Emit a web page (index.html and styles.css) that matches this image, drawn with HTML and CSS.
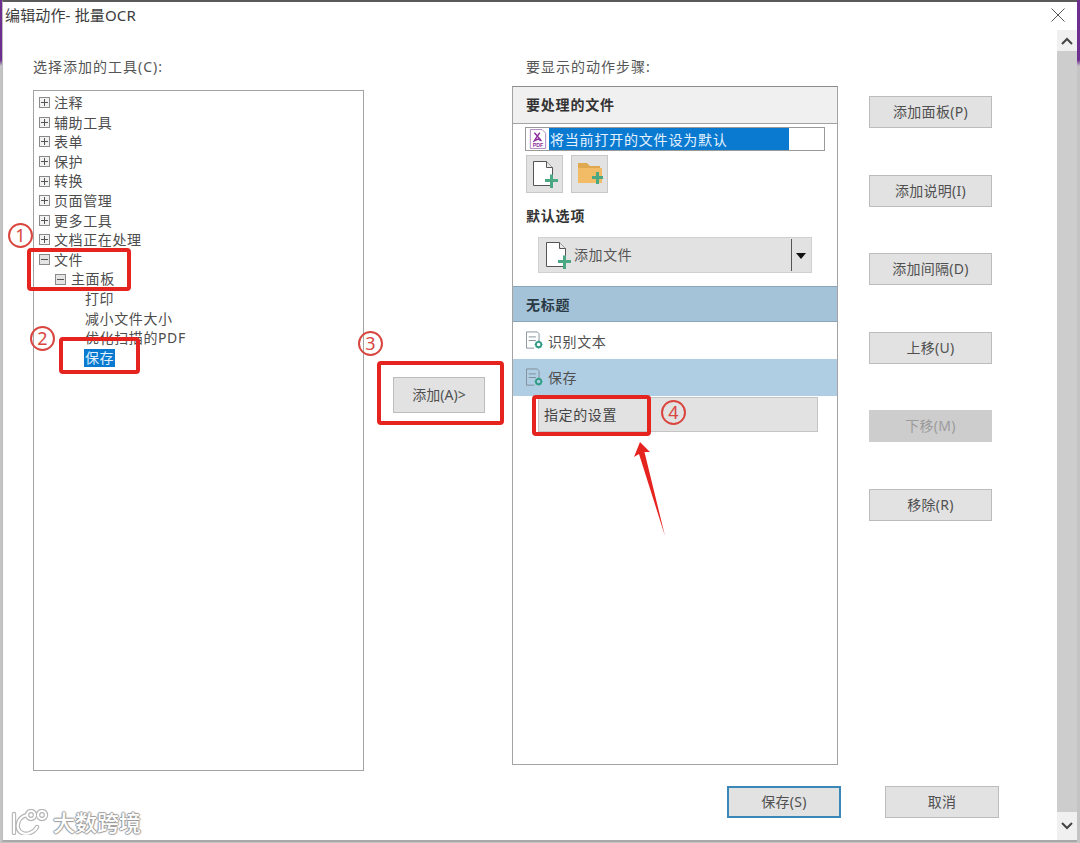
FILE: index.html
```html
<!DOCTYPE html>
<html lang="zh-CN">
<head>
<meta charset="utf-8">
<title>编辑动作- 批量OCR</title>
<link rel="stylesheet" href="styles.css">
</head>
<body>
<svg class="defs" width="0" height="0" aria-hidden="true">
  <symbol id="plus" viewBox="0 0 11 11"><rect x=".5" y=".5" width="10" height="10" fill="#f2f2f2" stroke="#8a8a8a"/><path d="M2 5.5h7M5.5 2v7" stroke="#555" fill="none"/></symbol>
  <symbol id="minus" viewBox="0 0 11 11"><rect x=".5" y=".5" width="10" height="10" fill="#e4e4e4" stroke="#8a8a8a"/><path d="M2 5.5h7" stroke="#555" fill="none"/></symbol>
  <symbol id="docplus" viewBox="0 0 30 30"><path d="M3.5 2.5h13l6 6v18h-19z" fill="#fff" stroke="#555"/><path d="M16.5 2.5v6h6" fill="#e8e8e8" stroke="#555"/><path d="M17 17h5v-4.500h3V17h5v3h-5v6h-3v-6h-5z" fill="#4aa882" transform="translate(-2 3)"/></symbol>
  <symbol id="folderplus" viewBox="0 0 30 30"><path d="M3 4h9l3 3h10v4H3z" fill="#e0a94f"/><path d="M3 9h24v15H3z" fill="#f2bb66"/><path d="M17 17h4v-4h3v4h4v3h-4v5h-3v-5h-4z" fill="#4aa882"/></symbol>
  <symbol id="docgear" viewBox="0 0 20 20"><path d="M.5 .5h12l2 2v9M9 18.500H.5V.5" fill="none" stroke="#7d8a94"/><path d="M3 6h8M3 10h8" stroke="#7d8a94" fill="none"/><circle cx="14" cy="14.500" r="3" fill="none" stroke="#2f9c86" stroke-width="2"/><path d="M14 10v1.500M14 17.500V19M9.500 14.500H11M17 14.500h1.500M11 11.500l1 1M16 16.500l1 1M17 11.500l-1 1M12 16.500l-1 1" stroke="#2f9c86"/></symbol>
</svg>
<div class="desktop">
  <div class="window">
    <header class="titlebar">
      <span class="title">编辑动作- 批量OCR</span>
      <svg class="close" viewBox="0 0 14 14"><path d="M.5 .5l13 13M13.500 .5l-13 13" stroke="#555" fill="none"/></svg>
    </header>
    <div class="body">
      <main class="main">
        <div class="columns">
          <section class="col-tree">
            <div class="label">选择添加的工具(C):</div>
            <div class="tree">
              <div class="row"><svg class="exp"><use href="#plus"/></svg>注释</div>
              <div class="row"><svg class="exp"><use href="#plus"/></svg>辅助工具</div>
              <div class="row"><svg class="exp"><use href="#plus"/></svg>表单</div>
              <div class="row"><svg class="exp"><use href="#plus"/></svg>保护</div>
              <div class="row"><svg class="exp"><use href="#plus"/></svg>转换</div>
              <div class="row"><svg class="exp"><use href="#plus"/></svg>页面管理</div>
              <div class="row"><svg class="exp"><use href="#plus"/></svg>更多工具</div>
              <div class="row"><svg class="exp"><use href="#plus"/></svg>文档正在处理</div>
              <div class="row"><svg class="exp"><use href="#minus"/></svg>文件</div>
              <div class="row lvl2"><svg class="exp"><use href="#minus"/></svg>主面板</div>
              <div class="row lvl3">打印</div>
              <div class="row lvl3">减小文件大小</div>
              <div class="row lvl3">优化扫描的PDF</div>
              <div class="row lvl3"><span class="sel">保存</span></div>
            </div>
          </section>
          <section class="col-add">
            <button class="btn btn-add">添加(A)&gt;</button>
          </section>
          <section class="col-steps">
            <div class="label label-steps">要显示的动作步骤:</div>
            <div class="panel">
              <div class="panel-head">要处理的文件</div>
              <div class="file-input">
                <svg class="pdf" viewBox="0 0 20 22"><path d="M1.500 .5h13l4 4v17h-17z" fill="#fff" stroke="#a67fbc"/><path d="M6 4l7 8M12 4L9 8l-3 5 4-2 4 2" stroke="#8e2f9e" stroke-width="1.600" fill="none"/><text class="pdf-label" x="10" y="20" text-anchor="middle">PDF</text></svg>
                <span class="file-sel">将当前打开的文件设为默认</span>
              </div>
              <div class="tool-row">
                <button class="tool"><svg class="tool-icon"><use href="#docplus"/></svg></button>
                <button class="tool"><svg class="tool-icon"><use href="#folderplus"/></svg></button>
              </div>
              <div class="sub-head">默认选项</div>
              <div class="dropdown">
                <svg class="drop-icon"><use href="#docplus"/></svg>
                <span class="drop-text">添加文件</span>
                <span class="drop-arrow"></span>
              </div>
              <div class="group-head">无标题</div>
              <div class="step"><svg class="gear"><use href="#docgear"/></svg>识别文本</div>
              <div class="step step-active"><svg class="gear"><use href="#docgear"/></svg>保存</div>
              <button class="setting">指定的设置</button>
            </div>
          </section>
          <section class="col-actions">
            <button class="btn btn-side">添加面板(P)</button>
            <button class="btn btn-side">添加说明(I)</button>
            <button class="btn btn-side">添加间隔(D)</button>
            <button class="btn btn-side">上移(U)</button>
            <button class="btn btn-side btn-disabled">下移(M)</button>
            <button class="btn btn-side">移除(R)</button>
          </section>
        </div>
        <footer class="footer">
          <button class="btn btn-foot btn-primary">保存(S)</button>
          <button class="btn btn-foot">取消</button>
        </footer>
      </main>
      <aside class="scrollbar">
        <div class="sb-arrow"><svg class="chev" viewBox="0 0 12 8"><path d="M1 7l5-5 5 5" stroke="#444" stroke-width="2" fill="none"/></svg></div>
        <div class="sb-thumb"></div>
        <div class="sb-arrow sb-down"><svg class="chev" viewBox="0 0 12 8"><path d="M1 1l5 5 5-5" stroke="#444" stroke-width="2" fill="none"/></svg></div>
      </aside>
    </div>
  </div>

  <div class="mark m1"></div>
  <div class="mark m2"></div>
  <div class="mark m3"></div>
  <div class="mark m4"></div>
  <span class="num n1">1</span>
  <span class="num n2">2</span>
  <span class="num n3">3</span>
  <span class="num n4">4</span>
  <svg class="arrow" viewBox="0 0 40 100"><path d="M8 0L18 10 12.500 10 33 94 7 12 2 15z" fill="#e5231f"/></svg>
  <div class="watermark">
    <svg class="wm-logo" viewBox="0 0 40 26"><g fill="none" stroke-linecap="round"><g stroke="#b4b4b4" stroke-width="4.400"><path d="M4 5v19M17 6C9 8 7 14 8 19s7 7 12 5 6-4 7-6"/><circle cx="21" cy="6" r="4"/><circle cx="32" cy="6" r="4"/></g><g stroke="#fff" stroke-width="2.200"><path d="M4 5v19M17 6C9 8 7 14 8 19s7 7 12 5 6-4 7-6"/><circle cx="21" cy="6" r="4"/><circle cx="32" cy="6" r="4"/></g></g></svg>
    <span class="wm-text">大数跨境</span>
  </div>
</div>
</body>
</html>
```

FILE: styles.css
```css
* { box-sizing: border-box; }
html, body { margin: 0; padding: 0; }
body {
  width: 1080px;
  height: 843px;
  overflow: hidden;
  font-family: "Noto Sans", "Noto Sans CJK SC", sans-serif;
  font-size: 14px;
  color: #4a4a4a;
  background: #fff;
}
.defs { position: absolute; }
.desktop {
  position: relative;
  width: 1080px;
  height: 843px;
  padding: 0 3px 0 2px;
  background: linear-gradient(#6d2f8f 0 60px, #c4c4c4 66px);
}
.window {
  width: 1075px;
  height: 842px;
  background: #fff;
  border-top: 2px solid #5a5a5a;
  border-left: 1px solid #bdbdbd;
  border-bottom: 2px solid #a8a8a8;
  display: flex;
  flex-direction: column;
}
.titlebar {
  height: 28px;
  flex: none;
  display: flex;
  align-items: center;
  justify-content: space-between;
  padding: 0 12px 3px 2px;
}
.title { font-size: 15px; letter-spacing: .15px; color: #3c3c3c; line-height: 24px; }
.close { width: 14px; height: 14px; }
.body { flex: 1; display: flex; min-height: 0; }
.main { flex: 1; padding: 27px 58px 0 30px; display: flex; flex-direction: column; }
.columns { display: flex; height: 714px; flex: none; }
.label { height: 20px; line-height: 20px; letter-spacing: 1px; color: #555; margin-bottom: 14px; white-space: nowrap; }
.col-tree { width: 331px; flex: none; }
.col-tree .label { margin-bottom: 13px; }
.tree {
  height: 681px;
  border: 1px solid #a3a3a3;
  padding: 2px 0 0 5px;
  background: #fff;
}
.row {
  height: 19.600px;
  line-height: 19.600px;
  display: flex;
  align-items: center;
  letter-spacing: .6px;
  white-space: nowrap;
  color: #4d4d4d;
}
.exp { width: 11px; height: 11px; margin-right: 4px; flex: none; }
.lvl2 { padding-left: 16px; }
.lvl2 .exp { margin-right: 5px; }
.lvl3 { padding-left: 46px; }
.sel { background: #0a7ad1; color: #dff0ff; padding: 0 1px; margin-left: -1px; height: 18px; line-height: 18px; }

.col-add { width: 148px; flex: none; padding: 320px 0 0 29px; }
.btn {
  font: inherit;
  color: #505050;
  background: #e2e2e2;
  border: 1px solid #bcbcbc;
  padding: 0 0 2px;
  white-space: nowrap;
  display: block;
}
.btn-add { width: 92px; height: 36px; }

.col-steps { width: 326px; flex: none; }
.label-steps { padding-left: 14px; margin-bottom: 9px; }
.panel { height: 679px; border: 1px solid #a3a3a3; border-top-color: #8c8c8c; background: #fff; }
.panel-head {
  height: 37px;
  line-height: 36px;
  padding-left: 13px;
  background: #f0f0f0;
  border-bottom: 1px solid #a3a3a3;
  font-weight: 700;
  letter-spacing: .8px;
  color: #333;
}
.file-input {
  margin: 3px 0 0 12px;
  width: 300px;
  height: 24px;
  border: 1px solid #9a9a9a;
  display: flex;
  align-items: center;
  padding-left: 3px;
}
.pdf { width: 18px; height: 20px; flex: none; margin-right: 2px; }
.pdf-label { font-size: 6px; font-weight: 700; fill: #8e2f9e; font-family: "Liberation Sans", sans-serif; }
.file-sel {
  width: 240px;
  height: 22px;
  line-height: 24px;
  background: #0a7ad1;
  color: #e4f2ff;
  letter-spacing: .8px;
  padding-left: 1px;
  white-space: nowrap;
}
.tool-row { display: flex; gap: 8px; margin: 4px 0 0 13px; }
.tool {
  width: 37px;
  height: 38px;
  background: #e2e2e2;
  border: 1px solid #c8c8c8;
  padding: 0;
  display: flex;
  align-items: center;
  justify-content: center;
}
.tool-icon { width: 30px; height: 30px; }
.sub-head { height: 20px; line-height: 20px; margin: 13px 0 0 13px; font-weight: 700; letter-spacing: .8px; color: #333; }
.dropdown {
  margin: 11px 0 0 25px;
  width: 274px;
  height: 36px;
  background: #e2e2e2;
  border: 1px solid #d0d0d0;
  display: flex;
  align-items: center;
  padding-left: 4px;
}
.drop-icon { width: 30px; height: 30px; flex: none; }
.drop-text { flex: 1; letter-spacing: .6px; color: #555; padding: 0 0 2px 1px; }
.drop-arrow {
  width: 20px;
  height: 32px;
  flex: none;
  border-left: 1px solid #555;
  position: relative;
}
.drop-arrow::after {
  content: "";
  position: absolute;
  left: 4px;
  top: 14px;
  border: 5.500px solid transparent;
  border-top: 6px solid #111;
  border-bottom: 0;
}
.group-head {
  margin-top: 13px;
  height: 36px;
  line-height: 35px;
  padding-left: 13px;
  background: #a5c3d8;
  border-top: 1px solid #8aa5b8;
  border-bottom: 1px solid #8aa5b8;
  font-weight: 700;
  letter-spacing: .8px;
  color: #2a3a45;
}
.step {
  height: 37px;
  display: flex;
  align-items: center;
  padding-left: 13px;
  letter-spacing: .6px;
  color: #505050;
}
.step-active { background: #b0cee3; padding-bottom: 1px; }
.gear { width: 18px; height: 19px; margin-right: 4px; flex: none; }
.setting {
  display: block;
  margin: 1px 0 0 25px;
  width: 280px;
  height: 35px;
  font: inherit;
  letter-spacing: .6px;
  text-align: left;
  color: #444;
  padding: 0 0 2px 5px;
  background: #e2e2e2;
  border: 1px solid #c4c4c4;
}

.col-actions { margin-left: 31px; width: 123px; flex: none; padding-top: 39px; display: flex; flex-direction: column; gap: 46.600px; }
.btn-side { width: 123px; height: 32px; letter-spacing: .3px; }
.btn-disabled { background: #cdcdcd; border-color: #cdcdcd; color: #9c9c9c; }
.footer { display: flex; justify-content: flex-end; gap: 44px; margin-top: 15px; }
.btn-foot { width: 114px; height: 32px; letter-spacing: .3px; }
.btn-primary { border: 2px solid #3a87b8; }

.scrollbar { width: 20px; flex: none; display: flex; flex-direction: column; background: #f0f0f0; }
.sb-arrow { height: 21px; flex: none; display: flex; align-items: center; justify-content: center; }
.sb-down { height: 28px; }
.sb-thumb { flex: 1; background: #cdcdcd; }
.chev { width: 12px; height: 8px; }

.mark { position: absolute; border: 4px solid #e5231f; border-radius: 4px; }
.m1 { left: 27px; top: 248px; width: 104px; height: 43px; }
.m2 { left: 59px; top: 337px; width: 81px; height: 37px; }
.m3 { left: 377px; top: 361px; width: 127px; height: 64px; }
.m4 { left: 532px; top: 395px; width: 119px; height: 41px; }
.num {
  position: absolute;
  width: 25px;
  height: 25px;
  border: 2px solid #d9463f;
  border-radius: 50%;
  color: #d9463f;
  font-size: 18px;
  line-height: 21px;
  text-align: center;
}
.n1 { left: 8px; top: 223px; }
.n2 { left: 30px; top: 326px; }
.n3 { left: 358px; top: 331px; }
.n4 { left: 661px; top: 400px; }
.arrow { position: absolute; left: 632px; top: 442px; width: 40px; height: 100px; }
.watermark { position: absolute; left: 10px; top: 808px; display: flex; align-items: center; gap: 3px; }
.wm-logo { width: 40px; height: 26px; flex: none; }
.wm-text {
  font-size: 22px;
  line-height: 28px;
  color: #fff;
  font-weight: 500;
  text-shadow: 1px 0 1px #999, -1px 0 1px #999, 0 1px 1px #999, 0 -1px 1px #999;
}
```
